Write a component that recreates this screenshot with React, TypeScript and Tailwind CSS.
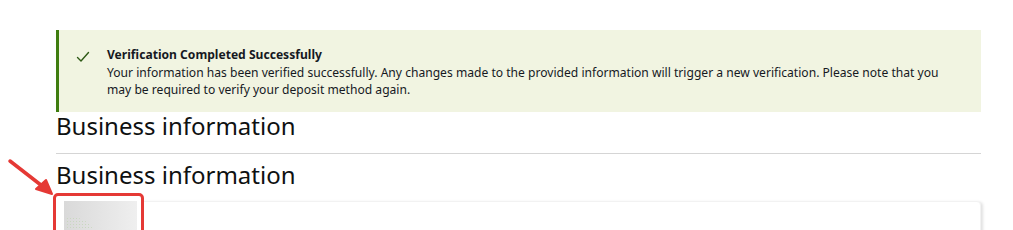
import React from 'react';

function CheckIcon() {
  return (
    <svg width="14" height="12" viewBox="0 0 14 12" fill="none" className="shrink-0">
      <path d="M1.5 6.5 L5 10 L12.5 1.5" stroke="#2f5a16" strokeWidth="1.4" strokeLinecap="round" strokeLinejoin="round" />
    </svg>
  );
}

function Arrow() {
  return (
    <svg width="60" height="45" viewBox="0 0 60 45" className="absolute left-0 top-[156px]">
      <path d="M10 5 L46 33" stroke="#e53935" strokeWidth="3.5" strokeLinecap="round" />
      <path d="M52 38 L36 33 L46 24 Z" fill="#e53935" stroke="#e53935" strokeWidth="2" strokeLinejoin="round" />
    </svg>
  );
}

export default function App() {
  return (
    <div className="relative w-[1013px] h-[230px] overflow-hidden bg-white font-['Noto_Sans',sans-serif] text-[#0f1111]">
      <Arrow />
      <div className="ml-[56px] w-[925px] pt-[30px]">
        <div className="flex gap-[17px] border-l-[3px] border-[#3f7d0f] bg-[#f1f4e1] pl-[17px] pr-[30px] pt-[16px] pb-[13px]">
          <div className="pt-[5px]">
            <CheckIcon />
          </div>
          <div className="text-[12.1px] leading-[17.5px] text-[#16191f]">
            <div className="font-bold">Verification Completed Successfully</div>
            <div>
              Your information has been verified successfully. Any changes made to the provided information will trigger a new
              verification. Please note that you may be required to verify your deposit method again.
            </div>
          </div>
        </div>

        <h2 className="-mt-[2px] text-[24px] leading-[32px] text-[#0f1111]">Business information</h2>
        <div className="mt-[11px] h-px bg-[#d5d5d5]" />
        <h2 className="mt-[5px] text-[24px] leading-[32px] text-[#0f1111]">Business information</h2>

        <div className="relative mt-[10px] h-[40px] rounded-sm border border-[#f2f2f2] bg-white shadow-[2px_1px_3px_rgba(0,0,0,0.12)]">
          <div className="absolute -left-[4px] -top-[9px] h-[50px] w-[91px] rounded-[5px] border-[3.5px] border-[#e53935] bg-white p-[5px] pl-[8px] pt-[5px]">
            <div className="relative h-full w-[73px] overflow-hidden bg-gradient-to-r from-[#d9d9d9] to-[#efefef]">
              <div className="absolute left-[2px] top-[16px] h-[24px] w-[30px] rounded-tr-full bg-[radial-gradient(#c9d7c0_0.6px,transparent_0.8px)] bg-[length:3px_3px]" />
            </div>
          </div>
        </div>
      </div>
    </div>
  );
}
